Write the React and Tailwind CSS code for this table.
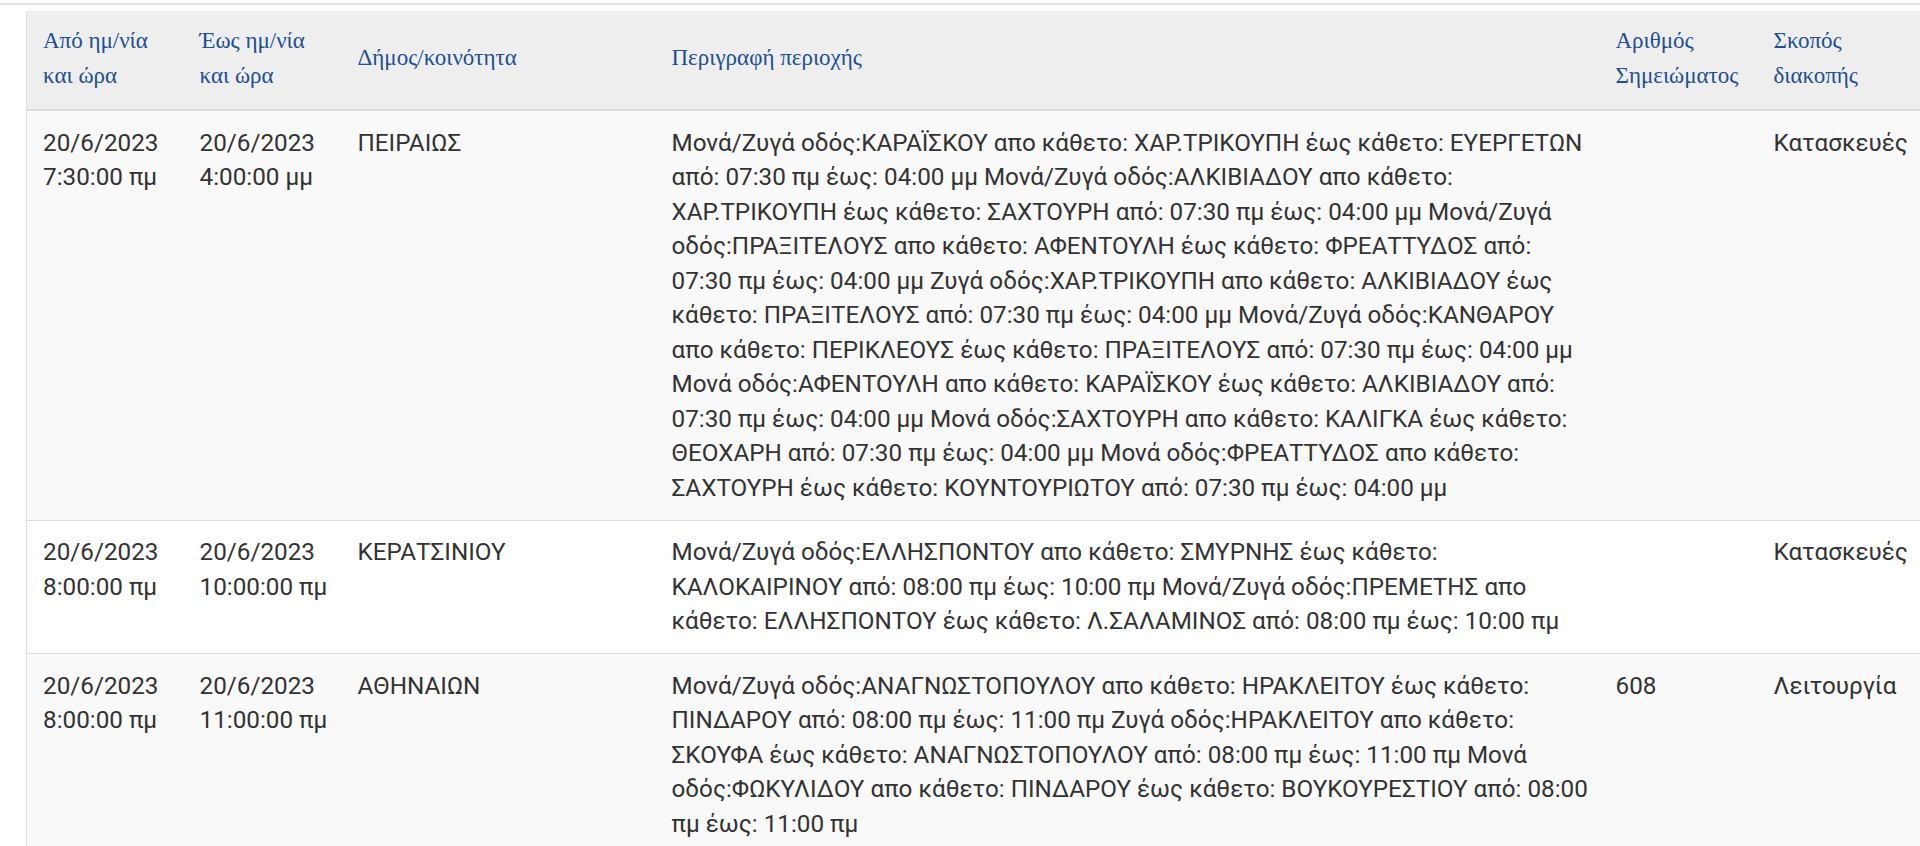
import React from "react";

const rows = [
    {
        from: ["20/6/2023", "7:30:00 πμ"],
        to: ["20/6/2023", "4:00:00 μμ"],
        municipality: "ΠΕΙΡΑΙΩΣ",
        description: [
            "Μονά/Ζυγά οδός:ΚΑΡΑΪΣΚΟΥ απο κάθετο: ΧΑΡ.ΤΡΙΚΟΥΠΗ έως κάθετο: ΕΥΕΡΓΕΤΩΝ",
            "από: 07:30 πμ έως: 04:00 μμ Μονά/Ζυγά οδός:ΑΛΚΙΒΙΑΔΟΥ απο κάθετο:",
            "ΧΑΡ.ΤΡΙΚΟΥΠΗ έως κάθετο: ΣΑΧΤΟΥΡΗ από: 07:30 πμ έως: 04:00 μμ Μονά/Ζυγά",
            "οδός:ΠΡΑΞΙΤΕΛΟΥΣ απο κάθετο: ΑΦΕΝΤΟΥΛΗ έως κάθετο: ΦΡΕΑΤΤΥΔΟΣ από:",
            "07:30 πμ έως: 04:00 μμ Ζυγά οδός:ΧΑΡ.ΤΡΙΚΟΥΠΗ απο κάθετο: ΑΛΚΙΒΙΑΔΟΥ έως",
            "κάθετο: ΠΡΑΞΙΤΕΛΟΥΣ από: 07:30 πμ έως: 04:00 μμ Μονά/Ζυγά οδός:ΚΑΝΘΑΡΟΥ",
            "απο κάθετο: ΠΕΡΙΚΛΕΟΥΣ έως κάθετο: ΠΡΑΞΙΤΕΛΟΥΣ από: 07:30 πμ έως: 04:00 μμ",
            "Μονά οδός:ΑΦΕΝΤΟΥΛΗ απο κάθετο: ΚΑΡΑΪΣΚΟΥ έως κάθετο: ΑΛΚΙΒΙΑΔΟΥ από:",
            "07:30 πμ έως: 04:00 μμ Μονά οδός:ΣΑΧΤΟΥΡΗ απο κάθετο: ΚΑΛΙΓΚΑ έως κάθετο:",
            "ΘΕΟΧΑΡΗ από: 07:30 πμ έως: 04:00 μμ Μονά οδός:ΦΡΕΑΤΤΥΔΟΣ απο κάθετο:",
            "ΣΑΧΤΟΥΡΗ έως κάθετο: ΚΟΥΝΤΟΥΡΙΩΤΟΥ από: 07:30 πμ έως: 04:00 μμ",
        ],
        note: "",
        purpose: "Κατασκευές",
    },
    {
        from: ["20/6/2023", "8:00:00 πμ"],
        to: ["20/6/2023", "10:00:00 πμ"],
        municipality: "ΚΕΡΑΤΣΙΝΙΟΥ",
        description: [
            "Μονά/Ζυγά οδός:ΕΛΛΗΣΠΟΝΤΟΥ απο κάθετο: ΣΜΥΡΝΗΣ έως κάθετο:",
            "ΚΑΛΟΚΑΙΡΙΝΟΥ από: 08:00 πμ έως: 10:00 πμ Μονά/Ζυγά οδός:ΠΡΕΜΕΤΗΣ απο",
            "κάθετο: ΕΛΛΗΣΠΟΝΤΟΥ έως κάθετο: Λ.ΣΑΛΑΜΙΝΟΣ από: 08:00 πμ έως: 10:00 πμ",
        ],
        note: "",
        purpose: "Κατασκευές",
    },
    {
        from: ["20/6/2023", "8:00:00 πμ"],
        to: ["20/6/2023", "11:00:00 πμ"],
        municipality: "ΑΘΗΝΑΙΩΝ",
        description: [
            "Μονά/Ζυγά οδός:ΑΝΑΓΝΩΣΤΟΠΟΥΛΟΥ απο κάθετο: ΗΡΑΚΛΕΙΤΟΥ έως κάθετο:",
            "ΠΙΝΔΑΡΟΥ από: 08:00 πμ έως: 11:00 πμ Ζυγά οδός:ΗΡΑΚΛΕΙΤΟΥ απο κάθετο:",
            "ΣΚΟΥΦΑ έως κάθετο: ΑΝΑΓΝΩΣΤΟΠΟΥΛΟΥ από: 08:00 πμ έως: 11:00 πμ Μονά",
            "οδός:ΦΩΚΥΛΙΔΟΥ απο κάθετο: ΠΙΝΔΑΡΟΥ έως κάθετο: ΒΟΥΚΟΥΡΕΣΤΙΟΥ από: 08:00",
            "πμ έως: 11:00 πμ",
        ],
        note: "608",
        purpose: "Λειτουργία",
    },
];

const th = "pl-4 pr-2 pt-[13px] pb-[16px] text-left align-middle font-normal";
const td = "pl-4 pr-2 py-[14.5px] align-top";

const App = () => {
    return (
        <div className="min-h-screen bg-white overflow-hidden">
            <div className="pt-[3px]">
                <div className="h-[2px] bg-[#e2e2e2]" />
            </div>
            <div className="pl-[26px] pt-[6px]">
                <table className="table-fixed border-collapse w-[2000px] border-l border-[#ddd] text-[24.25px] leading-[34.5px] font-['Roboto',sans-serif] text-[#333]">
                    <colgroup>
                        <col className="w-[157px]" />
                        <col className="w-[158px]" />
                        <col className="w-[314px]" />
                        <col className="w-[944px]" />
                        <col className="w-[158px]" />
                        <col />
                    </colgroup>
                    <thead>
                        <tr className="bg-[#eee] border-b-2 border-[#ddd] font-['Liberation_Serif',serif] text-[23px] text-[#214f95]">
                            <th className={th}>Από ημ/νία<br />και ώρα</th>
                            <th className={th}>Έως ημ/νία<br />και ώρα</th>
                            <th className={th}>Δήμος/κοινότητα</th>
                            <th className={th}>Περιγραφή περιοχής</th>
                            <th className={th}>Αριθμός<br />Σημειώματος</th>
                            <th className={th}>Σκοπός<br />διακοπής</th>
                        </tr>
                    </thead>
                    <tbody>
                        {rows.map((row, i) => (
                            <tr
                                key={i}
                                className={`border-b border-[#ddd] ${i % 2 === 0 ? "bg-[#f9f9f9]" : "bg-white"}`}
                            >
                                <td className={td}>{row.from[0]}<br />{row.from[1]}</td>
                                <td className={td}>{row.to[0]}<br />{row.to[1]}</td>
                                <td className={td}>{row.municipality}</td>
                                <td className={`${td} whitespace-nowrap`}>
                                    {row.description.map((line, j) => (
                                        <div key={j}>{line}</div>
                                    ))}
                                </td>
                                <td className={td}>{row.note}</td>
                                <td className={td}>{row.purpose}</td>
                            </tr>
                        ))}
                    </tbody>
                </table>
            </div>
        </div>
    );
};

export default App;
